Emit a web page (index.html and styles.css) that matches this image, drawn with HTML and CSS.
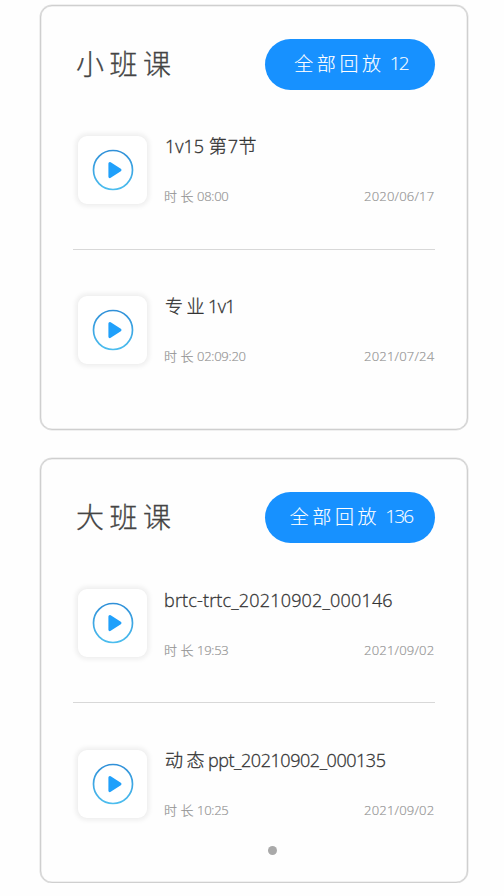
FILE: index.html
```html
<!DOCTYPE html>
<html lang="zh-CN">
<head>
<meta charset="utf-8">
<title>课程回放</title>
<link rel="stylesheet" href="styles.css">
</head>
<body>
<svg class="defs" width="0" height="0" aria-hidden="true">
  <defs>
    <linearGradient id="ring" x1="0" y1="0" x2="0" y2="1">
      <stop offset="0" stop-color="#3090d8"/><stop offset="1" stop-color="#4cbdee"/>
    </linearGradient>
    <symbol id="play" viewBox="0 0 42 42">
      <circle cx="21" cy="21" r="19.5" fill="none" stroke="url(#ring)" stroke-width="1.7"/>
      <path d="M17.9 14.6 L28 21 L17.9 27.6 Z" fill="#20a0fb" stroke="#20a0fb" stroke-width="3" stroke-linejoin="round"/>
    </symbol>
  </defs>
</svg>
<main class="page">
  <section class="card">
    <header class="head">
      <h2 class="heading">小班课</h2>
      <button class="all"><span class="all-label">全部回放</span><span class="all-count">12</span></button>
    </header>
    <article class="item">
      <div class="thumb"><svg class="play"><use href="#play"/></svg></div>
      <div class="info">
        <h3 class="name"><span>1v15</span> <span class="han-tight">第</span><span class="digit">7</span><span>节</span></h3>
        <div class="meta"><span><span class="label">时长</span><span class="time">08:00</span></span><span class="date">2020/06/17</span></div>
      </div>
    </article>
    <article class="item">
      <div class="thumb"><svg class="play"><use href="#play"/></svg></div>
      <div class="info">
        <h3 class="name"><span class="wide">专业</span><span class="tight">1v1</span></h3>
        <div class="meta"><span><span class="label">时长</span><span class="time">02:09:20</span></span><span class="date">2021/07/24</span></div>
      </div>
    </article>
  </section>
  <section class="card lower">
    <header class="head">
      <h2 class="heading">大班课</h2>
      <button class="all"><span class="all-label">全部回放</span><span class="all-count">136</span></button>
    </header>
    <article class="item">
      <div class="thumb"><svg class="play"><use href="#play"/></svg></div>
      <div class="info">
        <h3 class="name file">brtc-trtc_20210902_000146</h3>
        <div class="meta"><span><span class="label">时长</span><span class="time">19:53</span></span><span class="date">2021/09/02</span></div>
      </div>
    </article>
    <article class="item">
      <div class="thumb"><svg class="play"><use href="#play"/></svg></div>
      <div class="info">
        <h3 class="name file-han"><span class="wide">动态</span>ppt_20210902_000135</h3>
        <div class="meta"><span><span class="label">时长</span><span class="time">10:25</span></span><span class="date">2021/09/02</span></div>
      </div>
    </article>
    <i class="dot"></i>
  </section>
</main>
</body>
</html>
```
FILE: styles.css
```css
* { box-sizing: border-box; }
body {
  margin: 0;
  background: #fefefe;
  color: #444;
  font-family: "Open Sans", "Noto Sans CJK SC", sans-serif;
  font-weight: 300;
}
.defs { position: absolute; }
.page {
  display: flex;
  flex-direction: column;
  gap: 28px;
  width: 428px;
  margin: 5px 0 0 40px;
}
.card {
  position: relative;
  height: 425px;
  padding: 33px 32px 0;
  border: 1px solid #cfcfcf;
  border-radius: 12px;
  background: #fefefe;
  box-shadow: 0 0 0 0.5px #e2e2e2, inset 0 0 0 0.5px #e2e2e2;
}
.head {
  display: flex;
  align-items: center;
  justify-content: space-between;
  height: 51px;
}
.heading {
  margin: -2px 0 0 3px;
  font-size: 28px;
  font-weight: 300;
  line-height: 40px;
  letter-spacing: 5.5px;
  -webkit-text-stroke: 0.3px currentColor;
}
.all {
  display: flex;
  align-items: center;
  justify-content: center;
  gap: 5px;
  width: 170px;
  height: 51px;
  padding: 0 0 3px 2px;
  border: 0;
  border-radius: 26px;
  background: #1791ff;
  color: #fff;
  font: inherit;
  font-size: 19px;
  -webkit-text-stroke: 0.1px currentColor;
}
.all-label { letter-spacing: 3.6px; }
.all-count { letter-spacing: -1.8px; }
.item {
  display: flex;
  height: 159px;
  padding: 46px 0 0 5px;
}
.item + .item { border-top: 1px solid #d8d8d8; }
.lower .item + .item { padding-top: 47px; }
.thumb {
  display: grid;
  place-items: center;
  flex: none;
  width: 69px;
  height: 68px;
  border-radius: 9px;
  background: #fff;
  box-shadow: 0 0 5px 2px #ececec;
}
.play { width: 42px; height: 42px; }
.info {
  flex: 1;
  margin: -5px 1px 0 17px;
}
.lower .info { margin-top: -4px; }
.lower .item + .item .info { margin-top: -5px; }
.name {
  margin: 0;
  padding-left: 1px;
  height: 30px;
  font-size: 18px;
  font-weight: 300;
  line-height: 30px;
  white-space: nowrap;
  color: #333;
  -webkit-text-stroke: 0.3px currentColor;
}
.file {
  padding-left: 0;
  letter-spacing: 0.18px;
}
.file-han { letter-spacing: -0.45px; }
.han-tight { letter-spacing: 1px; }
.wide { letter-spacing: 3.5px; }
.tight { letter-spacing: -0.6px; }
.digit { letter-spacing: 0.5px; }
.meta {
  display: flex;
  justify-content: space-between;
  margin-top: 25px;
  font-size: 13px;
  line-height: 20px;
  color: #959595;
  -webkit-text-stroke: 0.2px currentColor;
}
.label { letter-spacing: 3.5px; }
.time { letter-spacing: -0.25px; }
.date {
  margin-right: -0.3px;
  letter-spacing: 0.2px;
}
.dot {
  position: absolute;
  left: 227px;
  top: 387px;
  width: 9px;
  height: 9px;
  border-radius: 50%;
  background: #a9a9a9;
}
```
